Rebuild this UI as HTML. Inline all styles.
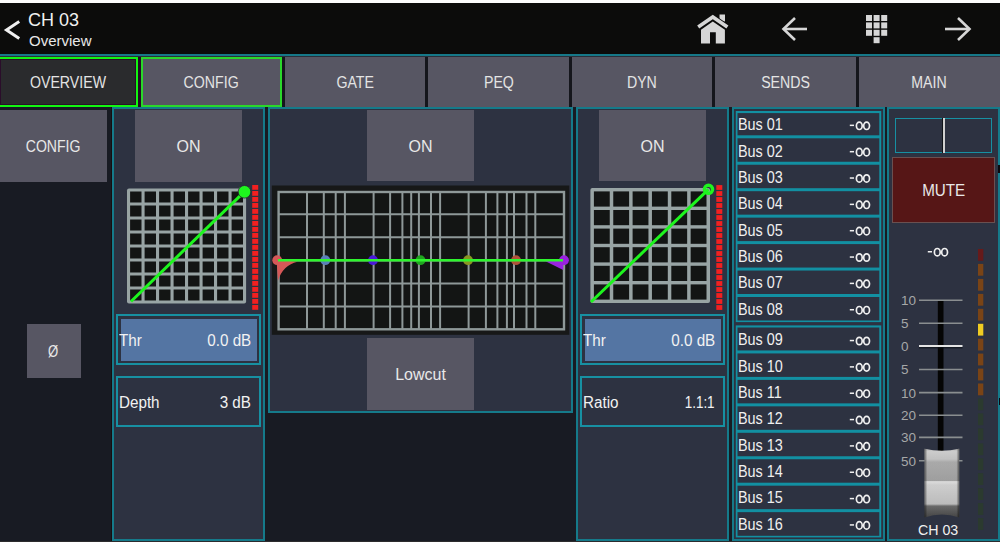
<!DOCTYPE html><html><head><meta charset="utf-8"><style>
*{margin:0;padding:0;box-sizing:border-box}
html,body{width:1000px;height:542px;overflow:hidden;background:#181b23}
body{position:relative;font-family:"Liberation Sans",sans-serif;color:#e6e6e6}
.a{position:absolute}
.btn{position:absolute;background:#575663;display:flex;align-items:center;justify-content:center;font-size:16px;color:#e8e8e8;padding-top:2px}
.tab{position:absolute;top:57px;height:49.5px;background:#575663;display:flex;align-items:center;justify-content:center;font-size:16px;color:#e4e4e4;padding-top:2px}
.sep{position:absolute;top:57px;height:49.5px;width:3px;background:#15161c}
.panel{position:absolute;border:2px solid #157a8a;background:#2d3241}
.t{position:absolute;line-height:1;white-space:pre}
.sx{display:inline-block;transform:scaleX(0.9)}
</style></head><body>

<div class="a" style="left:0;top:0;width:1000px;height:3px;background:#fcfcfc"></div>
<div class="a" style="left:0;top:3px;width:1000px;height:51px;background:#0c0c0b"></div>
<div class="a" style="left:0;top:54px;width:1000px;height:3px;background:#2a2f3a"></div>
<div class="a" style="left:0;top:53.8px;width:1000px;height:2.4px;background:#167888"></div>
<div class="t" style="left:28px;top:10.8px;font-size:18px;color:#f0f0f0">CH 03</div>
<div class="t" style="left:29px;top:33.3px;font-size:15px;color:#e8e8e8">Overview</div>
<svg class="a" style="left:0;top:0" width="1000" height="56">
<polyline points="18,22.3 6.5,30 18,37.7" fill="none" stroke="#f0f0f0" stroke-width="3" stroke-linecap="square"/>
<g fill="#d6d6d6">
<path d="M701,29.8 L712.8,21.6 L724.9,29.8 L724.9,43.4 L715.8,43.4 L715.8,32.2 L710,32.2 L710,43.4 L701,43.4 Z"/>
<rect x="719.5" y="14.5" width="5.5" height="7"/>
</g>
<polyline points="698.2,26.9 712.8,16.9 727.4,26.9" fill="none" stroke="#0c0c0c" stroke-width="5.2"/>
<polyline points="698.2,26.9 712.8,16.9 727.4,26.9" fill="none" stroke="#d6d6d6" stroke-width="3.6"/>
<g fill="none" stroke="#d6d6d6" stroke-width="2.6">
<polyline points="795,18 783.5,29 795,40"/><line x1="783.5" y1="29" x2="807" y2="29"/>
<polyline points="958,18 969.5,29 958,40"/><line x1="945" y1="29" x2="969.5" y2="29"/>
</g>
<g fill="#d6d6d6">

<rect x="866.0" y="15.0" width="6" height="6"/>
<rect x="873.6" y="15.0" width="6" height="6"/>
<rect x="881.2" y="15.0" width="6" height="6"/>
<rect x="866.0" y="22.4" width="6" height="6"/>
<rect x="873.6" y="22.4" width="6" height="6"/>
<rect x="881.2" y="22.4" width="6" height="6"/>
<rect x="866.0" y="29.8" width="6" height="6"/>
<rect x="873.6" y="29.8" width="6" height="6"/>
<rect x="881.2" y="29.8" width="6" height="6"/>
<rect x="873.6" y="37.2" width="6" height="6"/>
</g></svg>
<div class="tab" style="left:0px;width:138px;height:50px;background:#2a2b2d;border:2px solid #12f412;border-left:none;box-shadow:inset 0 0 0 1px #2a0d2a"><span class="sx" style="transform:scaleX(0.885)">OVERVIEW</span></div>
<div class="tab" style="left:141px;width:141px;height:50px;border:2px solid #2ad82a"><span class="sx" style="transform:scaleX(0.885)">CONFIG</span></div>
<div class="tab" style="left:285.0px;width:140.2px"><span class="sx" style="transform:scaleX(0.885)">GATE</span></div>
<div class="tab" style="left:428.2px;width:140.5px"><span class="sx" style="transform:scaleX(0.885)">PEQ</span></div>
<div class="tab" style="left:571.7px;width:140.6px"><span class="sx" style="transform:scaleX(0.885)">DYN</span></div>
<div class="tab" style="left:715.3px;width:140.6px"><span class="sx" style="transform:scaleX(0.885)">SENDS</span></div>
<div class="tab" style="left:858.9px;width:141.1px"><span class="sx" style="transform:scaleX(0.885)">MAIN</span></div>
<div class="a" style="left:138px;top:57px;width:3px;height:50px;background:#240a24"></div>
<div class="sep" style="left:282.0px"></div>
<div class="sep" style="left:425.2px"></div>
<div class="sep" style="left:568.7px"></div>
<div class="sep" style="left:712.3px"></div>
<div class="sep" style="left:855.9px"></div>
<div class="btn" style="left:0;top:110px;width:107px;height:72px"><span class="sx" style="transform:scaleX(0.88)">CONFIG</span></div>
<div class="btn" style="left:27px;top:324px;width:53.5px;height:54px;font-size:16px;padding-right:2px"><span class="sx" style="transform:scaleX(0.82)">Ø</span></div>
<div class="a" style="left:111px;top:107px;width:1px;height:435px;background:#180d10"></div>
<div class="panel" style="left:112px;top:107px;width:153px;height:434px"></div>
<div class="panel" style="left:268px;top:107px;width:305px;height:306px"></div>
<div class="panel" style="left:576px;top:107px;width:153px;height:434px"></div>
<div class="panel" style="left:732px;top:107px;width:153px;height:434px"></div>
<div class="panel" style="left:887px;top:107px;width:113px;height:434px"></div>
<div class="btn" style="left:135px;top:110px;width:107px;height:72px">ON</div>
<svg class="a" style="left:0;top:0" width="1000" height="542"><rect x="127.00" y="188.50" width="119.10" height="115.00" rx="2" fill="#98a4a4"/><rect x="130.10" y="191.50" width="11.40" height="11.00" fill="#131514"/><rect x="144.60" y="191.50" width="11.40" height="11.00" fill="#131514"/><rect x="159.10" y="191.50" width="11.40" height="11.00" fill="#131514"/><rect x="173.60" y="191.50" width="11.40" height="11.00" fill="#131514"/><rect x="188.10" y="191.50" width="11.40" height="11.00" fill="#131514"/><rect x="202.60" y="191.50" width="11.40" height="11.00" fill="#131514"/><rect x="217.10" y="191.50" width="11.40" height="11.00" fill="#131514"/><rect x="231.60" y="191.50" width="11.40" height="11.00" fill="#131514"/><rect x="130.10" y="205.50" width="11.40" height="11.00" fill="#131514"/><rect x="144.60" y="205.50" width="11.40" height="11.00" fill="#131514"/><rect x="159.10" y="205.50" width="11.40" height="11.00" fill="#131514"/><rect x="173.60" y="205.50" width="11.40" height="11.00" fill="#131514"/><rect x="188.10" y="205.50" width="11.40" height="11.00" fill="#131514"/><rect x="202.60" y="205.50" width="11.40" height="11.00" fill="#131514"/><rect x="217.10" y="205.50" width="11.40" height="11.00" fill="#131514"/><rect x="231.60" y="205.50" width="11.40" height="11.00" fill="#131514"/><rect x="130.10" y="219.50" width="11.40" height="11.00" fill="#131514"/><rect x="144.60" y="219.50" width="11.40" height="11.00" fill="#131514"/><rect x="159.10" y="219.50" width="11.40" height="11.00" fill="#131514"/><rect x="173.60" y="219.50" width="11.40" height="11.00" fill="#131514"/><rect x="188.10" y="219.50" width="11.40" height="11.00" fill="#131514"/><rect x="202.60" y="219.50" width="11.40" height="11.00" fill="#131514"/><rect x="217.10" y="219.50" width="11.40" height="11.00" fill="#131514"/><rect x="231.60" y="219.50" width="11.40" height="11.00" fill="#131514"/><rect x="130.10" y="233.50" width="11.40" height="11.00" fill="#131514"/><rect x="144.60" y="233.50" width="11.40" height="11.00" fill="#131514"/><rect x="159.10" y="233.50" width="11.40" height="11.00" fill="#131514"/><rect x="173.60" y="233.50" width="11.40" height="11.00" fill="#131514"/><rect x="188.10" y="233.50" width="11.40" height="11.00" fill="#131514"/><rect x="202.60" y="233.50" width="11.40" height="11.00" fill="#131514"/><rect x="217.10" y="233.50" width="11.40" height="11.00" fill="#131514"/><rect x="231.60" y="233.50" width="11.40" height="11.00" fill="#131514"/><rect x="130.10" y="247.50" width="11.40" height="11.00" fill="#131514"/><rect x="144.60" y="247.50" width="11.40" height="11.00" fill="#131514"/><rect x="159.10" y="247.50" width="11.40" height="11.00" fill="#131514"/><rect x="173.60" y="247.50" width="11.40" height="11.00" fill="#131514"/><rect x="188.10" y="247.50" width="11.40" height="11.00" fill="#131514"/><rect x="202.60" y="247.50" width="11.40" height="11.00" fill="#131514"/><rect x="217.10" y="247.50" width="11.40" height="11.00" fill="#131514"/><rect x="231.60" y="247.50" width="11.40" height="11.00" fill="#131514"/><rect x="130.10" y="261.50" width="11.40" height="11.00" fill="#131514"/><rect x="144.60" y="261.50" width="11.40" height="11.00" fill="#131514"/><rect x="159.10" y="261.50" width="11.40" height="11.00" fill="#131514"/><rect x="173.60" y="261.50" width="11.40" height="11.00" fill="#131514"/><rect x="188.10" y="261.50" width="11.40" height="11.00" fill="#131514"/><rect x="202.60" y="261.50" width="11.40" height="11.00" fill="#131514"/><rect x="217.10" y="261.50" width="11.40" height="11.00" fill="#131514"/><rect x="231.60" y="261.50" width="11.40" height="11.00" fill="#131514"/><rect x="130.10" y="275.50" width="11.40" height="11.00" fill="#131514"/><rect x="144.60" y="275.50" width="11.40" height="11.00" fill="#131514"/><rect x="159.10" y="275.50" width="11.40" height="11.00" fill="#131514"/><rect x="173.60" y="275.50" width="11.40" height="11.00" fill="#131514"/><rect x="188.10" y="275.50" width="11.40" height="11.00" fill="#131514"/><rect x="202.60" y="275.50" width="11.40" height="11.00" fill="#131514"/><rect x="217.10" y="275.50" width="11.40" height="11.00" fill="#131514"/><rect x="231.60" y="275.50" width="11.40" height="11.00" fill="#131514"/><rect x="130.10" y="289.50" width="11.40" height="11.00" fill="#131514"/><rect x="144.60" y="289.50" width="11.40" height="11.00" fill="#131514"/><rect x="159.10" y="289.50" width="11.40" height="11.00" fill="#131514"/><rect x="173.60" y="289.50" width="11.40" height="11.00" fill="#131514"/><rect x="188.10" y="289.50" width="11.40" height="11.00" fill="#131514"/><rect x="202.60" y="289.50" width="11.40" height="11.00" fill="#131514"/><rect x="217.10" y="289.50" width="11.40" height="11.00" fill="#131514"/><rect x="231.60" y="289.50" width="11.40" height="11.00" fill="#131514"/><rect x="252.2" y="185.0" width="6" height="4.8" fill="#f22020"/><rect x="252.2" y="191.0" width="6" height="4.8" fill="#f22020"/><rect x="252.2" y="197.0" width="6" height="4.8" fill="#f22020"/><rect x="252.2" y="203.0" width="6" height="4.8" fill="#f22020"/><rect x="252.2" y="209.0" width="6" height="4.8" fill="#f22020"/><rect x="252.2" y="215.0" width="6" height="4.8" fill="#f22020"/><rect x="252.2" y="221.0" width="6" height="4.8" fill="#f22020"/><rect x="252.2" y="227.0" width="6" height="4.8" fill="#f22020"/><rect x="252.2" y="233.0" width="6" height="4.8" fill="#f22020"/><rect x="252.2" y="239.0" width="6" height="4.8" fill="#f22020"/><rect x="252.2" y="245.0" width="6" height="4.8" fill="#f22020"/><rect x="252.2" y="251.0" width="6" height="4.8" fill="#f22020"/><rect x="252.2" y="257.0" width="6" height="4.8" fill="#f22020"/><rect x="252.2" y="263.0" width="6" height="4.8" fill="#f22020"/><rect x="252.2" y="269.0" width="6" height="4.8" fill="#f22020"/><rect x="252.2" y="275.0" width="6" height="4.8" fill="#f22020"/><rect x="252.2" y="281.0" width="6" height="4.8" fill="#f22020"/><rect x="252.2" y="287.0" width="6" height="4.8" fill="#f22020"/><rect x="252.2" y="293.0" width="6" height="4.8" fill="#f22020"/><rect x="252.2" y="299.0" width="6" height="4.8" fill="#f22020"/><rect x="252.2" y="305.0" width="6" height="4.8" fill="#f22020"/><line x1="131" y1="301.5" x2="244.5" y2="191.6" stroke="#1ef51e" stroke-width="3"/><circle cx="244.5" cy="191.8" r="6.3" fill="#1ef51e" stroke="#2a1038" stroke-width="0.7"/><rect x="590.40" y="188.00" width="119.60" height="115.00" rx="2" fill="#98a4a4"/><rect x="593.90" y="191.40" width="15.85" height="15.20" fill="#131514"/><rect x="613.25" y="191.40" width="15.85" height="15.20" fill="#131514"/><rect x="632.60" y="191.40" width="15.85" height="15.20" fill="#131514"/><rect x="651.95" y="191.40" width="15.85" height="15.20" fill="#131514"/><rect x="671.30" y="191.40" width="15.85" height="15.20" fill="#131514"/><rect x="690.65" y="191.40" width="15.85" height="15.20" fill="#131514"/><rect x="593.90" y="210.00" width="15.85" height="15.20" fill="#131514"/><rect x="613.25" y="210.00" width="15.85" height="15.20" fill="#131514"/><rect x="632.60" y="210.00" width="15.85" height="15.20" fill="#131514"/><rect x="651.95" y="210.00" width="15.85" height="15.20" fill="#131514"/><rect x="671.30" y="210.00" width="15.85" height="15.20" fill="#131514"/><rect x="690.65" y="210.00" width="15.85" height="15.20" fill="#131514"/><rect x="593.90" y="228.60" width="15.85" height="15.20" fill="#131514"/><rect x="613.25" y="228.60" width="15.85" height="15.20" fill="#131514"/><rect x="632.60" y="228.60" width="15.85" height="15.20" fill="#131514"/><rect x="651.95" y="228.60" width="15.85" height="15.20" fill="#131514"/><rect x="671.30" y="228.60" width="15.85" height="15.20" fill="#131514"/><rect x="690.65" y="228.60" width="15.85" height="15.20" fill="#131514"/><rect x="593.90" y="247.20" width="15.85" height="15.20" fill="#131514"/><rect x="613.25" y="247.20" width="15.85" height="15.20" fill="#131514"/><rect x="632.60" y="247.20" width="15.85" height="15.20" fill="#131514"/><rect x="651.95" y="247.20" width="15.85" height="15.20" fill="#131514"/><rect x="671.30" y="247.20" width="15.85" height="15.20" fill="#131514"/><rect x="690.65" y="247.20" width="15.85" height="15.20" fill="#131514"/><rect x="593.90" y="265.80" width="15.85" height="15.20" fill="#131514"/><rect x="613.25" y="265.80" width="15.85" height="15.20" fill="#131514"/><rect x="632.60" y="265.80" width="15.85" height="15.20" fill="#131514"/><rect x="651.95" y="265.80" width="15.85" height="15.20" fill="#131514"/><rect x="671.30" y="265.80" width="15.85" height="15.20" fill="#131514"/><rect x="690.65" y="265.80" width="15.85" height="15.20" fill="#131514"/><rect x="593.90" y="284.40" width="15.85" height="15.20" fill="#131514"/><rect x="613.25" y="284.40" width="15.85" height="15.20" fill="#131514"/><rect x="632.60" y="284.40" width="15.85" height="15.20" fill="#131514"/><rect x="651.95" y="284.40" width="15.85" height="15.20" fill="#131514"/><rect x="671.30" y="284.40" width="15.85" height="15.20" fill="#131514"/><rect x="690.65" y="284.40" width="15.85" height="15.20" fill="#131514"/><rect x="716.3" y="185.1" width="6" height="4.8" fill="#f22020"/><rect x="716.3" y="191.1" width="6" height="4.8" fill="#f22020"/><rect x="716.3" y="197.1" width="6" height="4.8" fill="#f22020"/><rect x="716.3" y="203.1" width="6" height="4.8" fill="#f22020"/><rect x="716.3" y="209.1" width="6" height="4.8" fill="#f22020"/><rect x="716.3" y="215.1" width="6" height="4.8" fill="#f22020"/><rect x="716.3" y="221.1" width="6" height="4.8" fill="#f22020"/><rect x="716.3" y="227.1" width="6" height="4.8" fill="#f22020"/><rect x="716.3" y="233.1" width="6" height="4.8" fill="#f22020"/><rect x="716.3" y="239.1" width="6" height="4.8" fill="#f22020"/><rect x="716.3" y="245.1" width="6" height="4.8" fill="#f22020"/><rect x="716.3" y="251.1" width="6" height="4.8" fill="#f22020"/><rect x="716.3" y="257.1" width="6" height="4.8" fill="#f22020"/><rect x="716.3" y="263.1" width="6" height="4.8" fill="#f22020"/><rect x="716.3" y="269.1" width="6" height="4.8" fill="#f22020"/><rect x="716.3" y="275.1" width="6" height="4.8" fill="#f22020"/><rect x="716.3" y="281.1" width="6" height="4.8" fill="#f22020"/><rect x="716.3" y="287.1" width="6" height="4.8" fill="#f22020"/><rect x="716.3" y="293.1" width="6" height="4.8" fill="#f22020"/><rect x="716.3" y="299.1" width="6" height="4.8" fill="#f22020"/><rect x="716.3" y="305.1" width="6" height="4.8" fill="#f22020"/><line x1="591" y1="302" x2="708.5" y2="189.3" stroke="#1ef51e" stroke-width="3"/><circle cx="708.5" cy="189.3" r="4.1" fill="none" stroke="#1ef51e" stroke-width="3.4"/><rect x="271.8" y="185.5" width="297.5" height="149.3" fill="#171818"/><rect x="278.6" y="192" width="285.4" height="137.3" fill="#131514" stroke="#8e9898" stroke-width="2.4"/><line x1="307.0" y1="191" x2="307.0" y2="329.5" stroke="#8e9898" stroke-width="2"/><line x1="323.8" y1="191" x2="323.8" y2="329.5" stroke="#8e9898" stroke-width="2"/><line x1="335.7" y1="191" x2="335.7" y2="329.5" stroke="#8e9898" stroke-width="2"/><line x1="344.9" y1="191" x2="344.9" y2="329.5" stroke="#8e9898" stroke-width="2"/><line x1="373.6" y1="191" x2="373.6" y2="329.5" stroke="#8e9898" stroke-width="2"/><line x1="390.1" y1="191" x2="390.1" y2="329.5" stroke="#8e9898" stroke-width="2"/><line x1="402.4" y1="191" x2="402.4" y2="329.5" stroke="#8e9898" stroke-width="2"/><line x1="411.2" y1="191" x2="411.2" y2="329.5" stroke="#8e9898" stroke-width="2"/><line x1="418.9" y1="191" x2="418.9" y2="329.5" stroke="#8e9898" stroke-width="2"/><line x1="431.0" y1="191" x2="431.0" y2="329.5" stroke="#8e9898" stroke-width="2"/><line x1="440.1" y1="191" x2="440.1" y2="329.5" stroke="#8e9898" stroke-width="2"/><line x1="468.6" y1="191" x2="468.6" y2="329.5" stroke="#8e9898" stroke-width="2"/><line x1="485.9" y1="191" x2="485.9" y2="329.5" stroke="#8e9898" stroke-width="2"/><line x1="497.4" y1="191" x2="497.4" y2="329.5" stroke="#8e9898" stroke-width="2"/><line x1="506.9" y1="191" x2="506.9" y2="329.5" stroke="#8e9898" stroke-width="2"/><line x1="514.0" y1="191" x2="514.0" y2="329.5" stroke="#8e9898" stroke-width="2"/><line x1="526.5" y1="191" x2="526.5" y2="329.5" stroke="#8e9898" stroke-width="2"/><line x1="535.3" y1="191" x2="535.3" y2="329.5" stroke="#8e9898" stroke-width="2"/><line x1="278" y1="214.2" x2="564.5" y2="214.2" stroke="#8e9898" stroke-width="2"/><line x1="278" y1="237.3" x2="564.5" y2="237.3" stroke="#8e9898" stroke-width="2"/><line x1="278" y1="260.4" x2="564.5" y2="260.4" stroke="#8e9898" stroke-width="2"/><line x1="278" y1="283.5" x2="564.5" y2="283.5" stroke="#8e9898" stroke-width="2"/><line x1="278" y1="306.5" x2="564.5" y2="306.5" stroke="#8e9898" stroke-width="2"/><circle cx="277.2" cy="260.2" r="4.9" fill="#d65858"/><circle cx="325.3" cy="260.2" r="4.9" fill="#5b7fb8"/><circle cx="373.0" cy="260.2" r="4.9" fill="#4a18d8"/><circle cx="420.5" cy="260.2" r="4.9" fill="#1fa51f"/><circle cx="468.0" cy="260.2" r="4.9" fill="#8a9422"/><circle cx="516.0" cy="260.2" r="4.9" fill="#b0523a"/><circle cx="564.0" cy="260.2" r="4.9" fill="#9a22e0"/><path d="M276.5,259.5 L297.5,261.8 Q283,265 278,280.8 Z" fill="#d65858"/><path d="M563.5,259 L545.5,261.3 L563.2,270 Z" fill="#9a22e0"/><line x1="278" y1="260.3" x2="563" y2="260.3" stroke="#2ef52e" stroke-width="2.5"/></svg>
<div class="btn" style="left:367px;top:110px;width:107px;height:71px">ON</div>
<div class="btn" style="left:367px;top:338px;width:107px;height:72px">Lowcut</div>
<div class="btn" style="left:599px;top:110px;width:107px;height:71px">ON</div>
<div class="a" style="left:116px;top:314px;width:145px;height:51px;border:2px solid #1790a2;background:#2d3241"></div>
<div class="a" style="left:120.5px;top:318.7px;width:136.3px;height:42.3px;background:#5475a3"></div>
<div class="t" style="left:118.8px;top:333.1px;font-size:16px;color:#f2f2f2"><span class="sx" style="transform:scaleX(0.95);transform-origin:0 0">Thr</span></div>
<div class="t" style="right:749.0px;top:333.1px;font-size:16px;color:#f2f2f2"><span class="sx" style="transform:scaleX(0.950);transform-origin:100% 0">0.0 dB</span></div>
<div class="a" style="left:116px;top:376px;width:145px;height:51px;border:2px solid #1790a2;background:#2d3241"></div>
<div class="t" style="left:118.8px;top:395.1px;font-size:16px;color:#f2f2f2"><span class="sx" style="transform:scaleX(0.95);transform-origin:0 0">Depth</span></div>
<div class="t" style="right:749.0px;top:395.1px;font-size:16px;color:#f2f2f2"><span class="sx" style="transform:scaleX(0.950);transform-origin:100% 0">3 dB</span></div>
<div class="a" style="left:580px;top:314px;width:145px;height:51px;border:2px solid #1790a2;background:#2d3241"></div>
<div class="a" style="left:584.5px;top:318.7px;width:136.3px;height:42.3px;background:#5475a3"></div>
<div class="t" style="left:582.8px;top:333.1px;font-size:16px;color:#f2f2f2"><span class="sx" style="transform:scaleX(0.95);transform-origin:0 0">Thr</span></div>
<div class="t" style="right:285.0px;top:333.1px;font-size:16px;color:#f2f2f2"><span class="sx" style="transform:scaleX(0.950);transform-origin:100% 0">0.0 dB</span></div>
<div class="a" style="left:580px;top:376px;width:145px;height:51px;border:2px solid #1790a2;background:#2d3241"></div>
<div class="t" style="left:582.8px;top:395.1px;font-size:16px;color:#f2f2f2"><span class="sx" style="transform:scaleX(0.95);transform-origin:0 0">Ratio</span></div>
<div class="t" style="right:285.0px;top:395.1px;font-size:16px;color:#f2f2f2"><span class="sx" style="transform:scaleX(0.840);transform-origin:100% 0">1.1:1</span></div>
<svg class="a" style="left:0;top:0" width="1000" height="542"><rect x="735.8" y="111.00" width="145.4" height="211.10" fill="#1290a2"/><rect x="737.5" y="113.10" width="141.8" height="22.20" fill="#2d3241"/><rect x="849.80" y="124.60" width="4.2" height="1.5" fill="#f0f0f0"/><ellipse cx="859.30" cy="125.80" rx="2.9" ry="3.7" fill="none" stroke="#f0f0f0" stroke-width="1.7"/><ellipse cx="866.60" cy="125.80" rx="2.9" ry="3.7" fill="none" stroke="#f0f0f0" stroke-width="1.7"/><rect x="737.5" y="138.30" width="141.8" height="23.45" fill="#2d3241"/><rect x="849.80" y="150.94" width="4.2" height="1.5" fill="#f0f0f0"/><ellipse cx="859.30" cy="152.14" rx="2.9" ry="3.7" fill="none" stroke="#f0f0f0" stroke-width="1.7"/><ellipse cx="866.60" cy="152.14" rx="2.9" ry="3.7" fill="none" stroke="#f0f0f0" stroke-width="1.7"/><rect x="737.5" y="164.75" width="141.8" height="23.45" fill="#2d3241"/><rect x="849.80" y="177.28" width="4.2" height="1.5" fill="#f0f0f0"/><ellipse cx="859.30" cy="178.48" rx="2.9" ry="3.7" fill="none" stroke="#f0f0f0" stroke-width="1.7"/><ellipse cx="866.60" cy="178.48" rx="2.9" ry="3.7" fill="none" stroke="#f0f0f0" stroke-width="1.7"/><rect x="737.5" y="191.20" width="141.8" height="23.45" fill="#2d3241"/><rect x="849.80" y="203.62" width="4.2" height="1.5" fill="#f0f0f0"/><ellipse cx="859.30" cy="204.82" rx="2.9" ry="3.7" fill="none" stroke="#f0f0f0" stroke-width="1.7"/><ellipse cx="866.60" cy="204.82" rx="2.9" ry="3.7" fill="none" stroke="#f0f0f0" stroke-width="1.7"/><rect x="737.5" y="217.65" width="141.8" height="23.45" fill="#2d3241"/><rect x="849.80" y="229.96" width="4.2" height="1.5" fill="#f0f0f0"/><ellipse cx="859.30" cy="231.16" rx="2.9" ry="3.7" fill="none" stroke="#f0f0f0" stroke-width="1.7"/><ellipse cx="866.60" cy="231.16" rx="2.9" ry="3.7" fill="none" stroke="#f0f0f0" stroke-width="1.7"/><rect x="737.5" y="244.10" width="141.8" height="23.45" fill="#2d3241"/><rect x="849.80" y="256.30" width="4.2" height="1.5" fill="#f0f0f0"/><ellipse cx="859.30" cy="257.50" rx="2.9" ry="3.7" fill="none" stroke="#f0f0f0" stroke-width="1.7"/><ellipse cx="866.60" cy="257.50" rx="2.9" ry="3.7" fill="none" stroke="#f0f0f0" stroke-width="1.7"/><rect x="737.5" y="270.55" width="141.8" height="23.45" fill="#2d3241"/><rect x="849.80" y="282.64" width="4.2" height="1.5" fill="#f0f0f0"/><ellipse cx="859.30" cy="283.84" rx="2.9" ry="3.7" fill="none" stroke="#f0f0f0" stroke-width="1.7"/><ellipse cx="866.60" cy="283.84" rx="2.9" ry="3.7" fill="none" stroke="#f0f0f0" stroke-width="1.7"/><rect x="737.5" y="297.00" width="141.8" height="23.50" fill="#2d3241"/><rect x="849.80" y="308.98" width="4.2" height="1.5" fill="#f0f0f0"/><ellipse cx="859.30" cy="310.18" rx="2.9" ry="3.7" fill="none" stroke="#f0f0f0" stroke-width="1.7"/><ellipse cx="866.60" cy="310.18" rx="2.9" ry="3.7" fill="none" stroke="#f0f0f0" stroke-width="1.7"/><rect x="735.8" y="325.40" width="145.4" height="212.00" fill="#1290a2"/><rect x="737.5" y="327.50" width="141.8" height="22.95" fill="#2d3241"/><rect x="849.80" y="339.80" width="4.2" height="1.5" fill="#f0f0f0"/><ellipse cx="859.30" cy="341.00" rx="2.9" ry="3.7" fill="none" stroke="#f0f0f0" stroke-width="1.7"/><ellipse cx="866.60" cy="341.00" rx="2.9" ry="3.7" fill="none" stroke="#f0f0f0" stroke-width="1.7"/><rect x="737.5" y="353.45" width="141.8" height="23.45" fill="#2d3241"/><rect x="849.80" y="366.14" width="4.2" height="1.5" fill="#f0f0f0"/><ellipse cx="859.30" cy="367.34" rx="2.9" ry="3.7" fill="none" stroke="#f0f0f0" stroke-width="1.7"/><ellipse cx="866.60" cy="367.34" rx="2.9" ry="3.7" fill="none" stroke="#f0f0f0" stroke-width="1.7"/><rect x="737.5" y="379.90" width="141.8" height="23.45" fill="#2d3241"/><rect x="849.80" y="392.48" width="4.2" height="1.5" fill="#f0f0f0"/><ellipse cx="859.30" cy="393.68" rx="2.9" ry="3.7" fill="none" stroke="#f0f0f0" stroke-width="1.7"/><ellipse cx="866.60" cy="393.68" rx="2.9" ry="3.7" fill="none" stroke="#f0f0f0" stroke-width="1.7"/><rect x="737.5" y="406.35" width="141.8" height="23.45" fill="#2d3241"/><rect x="849.80" y="418.82" width="4.2" height="1.5" fill="#f0f0f0"/><ellipse cx="859.30" cy="420.02" rx="2.9" ry="3.7" fill="none" stroke="#f0f0f0" stroke-width="1.7"/><ellipse cx="866.60" cy="420.02" rx="2.9" ry="3.7" fill="none" stroke="#f0f0f0" stroke-width="1.7"/><rect x="737.5" y="432.80" width="141.8" height="23.45" fill="#2d3241"/><rect x="849.80" y="445.16" width="4.2" height="1.5" fill="#f0f0f0"/><ellipse cx="859.30" cy="446.36" rx="2.9" ry="3.7" fill="none" stroke="#f0f0f0" stroke-width="1.7"/><ellipse cx="866.60" cy="446.36" rx="2.9" ry="3.7" fill="none" stroke="#f0f0f0" stroke-width="1.7"/><rect x="737.5" y="459.25" width="141.8" height="23.45" fill="#2d3241"/><rect x="849.80" y="471.50" width="4.2" height="1.5" fill="#f0f0f0"/><ellipse cx="859.30" cy="472.70" rx="2.9" ry="3.7" fill="none" stroke="#f0f0f0" stroke-width="1.7"/><ellipse cx="866.60" cy="472.70" rx="2.9" ry="3.7" fill="none" stroke="#f0f0f0" stroke-width="1.7"/><rect x="737.5" y="485.70" width="141.8" height="23.45" fill="#2d3241"/><rect x="849.80" y="497.84" width="4.2" height="1.5" fill="#f0f0f0"/><ellipse cx="859.30" cy="499.04" rx="2.9" ry="3.7" fill="none" stroke="#f0f0f0" stroke-width="1.7"/><ellipse cx="866.60" cy="499.04" rx="2.9" ry="3.7" fill="none" stroke="#f0f0f0" stroke-width="1.7"/><rect x="737.5" y="512.15" width="141.8" height="23.65" fill="#2d3241"/><rect x="849.80" y="524.18" width="4.2" height="1.5" fill="#f0f0f0"/><ellipse cx="859.30" cy="525.38" rx="2.9" ry="3.7" fill="none" stroke="#f0f0f0" stroke-width="1.7"/><ellipse cx="866.60" cy="525.38" rx="2.9" ry="3.7" fill="none" stroke="#f0f0f0" stroke-width="1.7"/><rect x="927.80" y="251.00" width="4.2" height="1.5" fill="#f0f0f0"/><ellipse cx="937.30" cy="252.20" rx="2.9" ry="3.7" fill="none" stroke="#f0f0f0" stroke-width="1.7"/><ellipse cx="944.60" cy="252.20" rx="2.9" ry="3.7" fill="none" stroke="#f0f0f0" stroke-width="1.7"/></svg>
<div class="t" style="left:737.5px;top:117.16px;font-size:16px;color:#f0f0f0"><span class="sx" style="transform:scaleX(0.9);transform-origin:0 0">Bus 01</span></div>
<div class="t" style="left:737.5px;top:143.50px;font-size:16px;color:#f0f0f0"><span class="sx" style="transform:scaleX(0.9);transform-origin:0 0">Bus 02</span></div>
<div class="t" style="left:737.5px;top:169.84px;font-size:16px;color:#f0f0f0"><span class="sx" style="transform:scaleX(0.9);transform-origin:0 0">Bus 03</span></div>
<div class="t" style="left:737.5px;top:196.18px;font-size:16px;color:#f0f0f0"><span class="sx" style="transform:scaleX(0.9);transform-origin:0 0">Bus 04</span></div>
<div class="t" style="left:737.5px;top:222.52px;font-size:16px;color:#f0f0f0"><span class="sx" style="transform:scaleX(0.9);transform-origin:0 0">Bus 05</span></div>
<div class="t" style="left:737.5px;top:248.86px;font-size:16px;color:#f0f0f0"><span class="sx" style="transform:scaleX(0.9);transform-origin:0 0">Bus 06</span></div>
<div class="t" style="left:737.5px;top:275.20px;font-size:16px;color:#f0f0f0"><span class="sx" style="transform:scaleX(0.9);transform-origin:0 0">Bus 07</span></div>
<div class="t" style="left:737.5px;top:301.54px;font-size:16px;color:#f0f0f0"><span class="sx" style="transform:scaleX(0.9);transform-origin:0 0">Bus 08</span></div>
<div class="t" style="left:737.5px;top:332.36px;font-size:16px;color:#f0f0f0"><span class="sx" style="transform:scaleX(0.9);transform-origin:0 0">Bus 09</span></div>
<div class="t" style="left:737.5px;top:358.70px;font-size:16px;color:#f0f0f0"><span class="sx" style="transform:scaleX(0.9);transform-origin:0 0">Bus 10</span></div>
<div class="t" style="left:737.5px;top:385.04px;font-size:16px;color:#f0f0f0"><span class="sx" style="transform:scaleX(0.9);transform-origin:0 0">Bus 11</span></div>
<div class="t" style="left:737.5px;top:411.38px;font-size:16px;color:#f0f0f0"><span class="sx" style="transform:scaleX(0.9);transform-origin:0 0">Bus 12</span></div>
<div class="t" style="left:737.5px;top:437.72px;font-size:16px;color:#f0f0f0"><span class="sx" style="transform:scaleX(0.9);transform-origin:0 0">Bus 13</span></div>
<div class="t" style="left:737.5px;top:464.06px;font-size:16px;color:#f0f0f0"><span class="sx" style="transform:scaleX(0.9);transform-origin:0 0">Bus 14</span></div>
<div class="t" style="left:737.5px;top:490.40px;font-size:16px;color:#f0f0f0"><span class="sx" style="transform:scaleX(0.9);transform-origin:0 0">Bus 15</span></div>
<div class="t" style="left:737.5px;top:516.74px;font-size:16px;color:#f0f0f0"><span class="sx" style="transform:scaleX(0.9);transform-origin:0 0">Bus 16</span></div>
<div class="a" style="left:894.6px;top:117.6px;width:97.5px;height:35.5px;border:1.5px solid #1790a2"></div>
<div class="a" style="left:943px;top:118px;width:2px;height:35px;background:#d0d0d0;box-shadow:-1px 0 0 #101418"></div>
<div class="btn" style="left:892px;top:157px;width:103px;height:66px;background:#561616;border:1px solid #6a5050"><span class="sx" style="transform:scaleX(0.95)">MUTE</span></div>
<svg class="a" style="left:0;top:0" width="1000" height="542"><rect x="978" y="249.0" width="5.3" height="11.8" fill="#661a1a"/><rect x="978" y="263.9" width="5.3" height="11.8" fill="#7a4416"/><rect x="978" y="278.9" width="5.3" height="11.8" fill="#7a4416"/><rect x="978" y="293.9" width="5.3" height="11.8" fill="#7a4416"/><rect x="978" y="308.8" width="5.3" height="11.8" fill="#7a4416"/><rect x="978" y="323.8" width="5.3" height="11.8" fill="#f0cc22"/><rect x="978" y="338.7" width="5.3" height="11.8" fill="#7a4416"/><rect x="978" y="353.6" width="5.3" height="11.8" fill="#7a4416"/><rect x="978" y="368.6" width="5.3" height="11.8" fill="#7a4416"/><rect x="978" y="383.5" width="5.3" height="11.8" fill="#7a4416"/><rect x="978" y="398.5" width="5.3" height="11.8" fill="#2b3a2f"/><rect x="978" y="413.4" width="5.3" height="11.8" fill="#2b3a2f"/><rect x="978" y="428.4" width="5.3" height="11.8" fill="#2b3a2f"/><rect x="978" y="443.4" width="5.3" height="11.8" fill="#2b3a2f"/><rect x="978" y="458.3" width="5.3" height="11.8" fill="#2b3a2f"/><rect x="978" y="473.2" width="5.3" height="11.8" fill="#2b3a2f"/><rect x="978" y="488.2" width="5.3" height="11.8" fill="#2b3a2f"/><rect x="978" y="503.1" width="5.3" height="11.8" fill="#2b3a2f"/><rect x="978" y="518.1" width="5.3" height="11.8" fill="#2b3a2f"/><rect x="937.8" y="301" width="5.7" height="150" fill="#050505"/><line x1="919" y1="300.2" x2="962.5" y2="300.2" stroke="#8a8e90" stroke-width="1.6"/><text x="901" y="305.1" font-family="Liberation Sans" font-size="13.5" fill="#a6a8a8">10</text><line x1="919" y1="323.2" x2="962.5" y2="323.2" stroke="#8a8e90" stroke-width="1.6"/><text x="901" y="328.1" font-family="Liberation Sans" font-size="13.5" fill="#a6a8a8">5</text><line x1="919" y1="347.8" x2="962.5" y2="347.8" stroke="#0c1018" stroke-width="1"/><line x1="919" y1="346.0" x2="962.5" y2="346.0" stroke="#e4e4e4" stroke-width="2.2"/><text x="901" y="350.9" font-family="Liberation Sans" font-size="13.5" fill="#a6a8a8">0</text><line x1="919" y1="369.5" x2="962.5" y2="369.5" stroke="#8a8e90" stroke-width="1.6"/><text x="901" y="374.4" font-family="Liberation Sans" font-size="13.5" fill="#a6a8a8">5</text><line x1="919" y1="392.6" x2="962.5" y2="392.6" stroke="#8a8e90" stroke-width="1.6"/><text x="901" y="397.5" font-family="Liberation Sans" font-size="13.5" fill="#a6a8a8">10</text><line x1="919" y1="415.3" x2="962.5" y2="415.3" stroke="#8a8e90" stroke-width="1.6"/><text x="901" y="420.2" font-family="Liberation Sans" font-size="13.5" fill="#a6a8a8">20</text><line x1="919" y1="437.4" x2="962.5" y2="437.4" stroke="#8a8e90" stroke-width="1.6"/><text x="901" y="442.3" font-family="Liberation Sans" font-size="13.5" fill="#a6a8a8">30</text><line x1="919" y1="460.7" x2="962.5" y2="460.7" stroke="#8a8e90" stroke-width="1.6"/><text x="901" y="465.6" font-family="Liberation Sans" font-size="13.5" fill="#a6a8a8">50</text><defs><linearGradient id="kg" x1="0" y1="448" x2="0" y2="518" gradientUnits="userSpaceOnUse">
<stop offset="0" stop-color="#c4c4c4"/><stop offset="0.05" stop-color="#e2e2e2"/><stop offset="0.16" stop-color="#d6d6d6"/><stop offset="0.2" stop-color="#bcbcbc"/>
<stop offset="0.47" stop-color="#b0b0b0"/><stop offset="0.48" stop-color="#f4f4f4"/><stop offset="0.53" stop-color="#e4e4e4"/>
<stop offset="0.8" stop-color="#d0d0d0"/><stop offset="0.83" stop-color="#747474"/><stop offset="1" stop-color="#4a4a4a"/></linearGradient>
<linearGradient id="kh" x1="924.5" y1="0" x2="959.2" y2="0" gradientUnits="userSpaceOnUse"><stop offset="0" stop-color="#000" stop-opacity="0.55"/><stop offset="0.08" stop-color="#000" stop-opacity="0.1"/><stop offset="0.92" stop-color="#000" stop-opacity="0.1"/><stop offset="1" stop-color="#000" stop-opacity="0.55"/></linearGradient></defs>
<path d="M924.5,448.8 Q941.8,452.5 959.2,448.8 L959.2,517.4 Q941.8,511.5 924.5,517.4 Z" fill="url(#kg)"/>
<path d="M924.5,448.8 Q941.8,452.5 959.2,448.8 L959.2,517.4 Q941.8,511.5 924.5,517.4 Z" fill="url(#kh)"/>
</svg>
<div class="t" style="left:917.5px;top:522.9px;font-size:14.5px;color:#f0f0f0"><span class="sx" style="transform:scaleX(0.98);transform-origin:0 0">CH 03</span></div>
<div class="a" style="left:998px;top:165px;width:2px;height:8px;background:#0a0a0e"></div>
<div class="a" style="left:998.5px;top:397.5px;width:1.5px;height:7.5px;background:#0a0a14"></div>
<div class="a" style="left:0;top:541px;width:1000px;height:1px;background:#2c2c2e"></div>
</body></html>
